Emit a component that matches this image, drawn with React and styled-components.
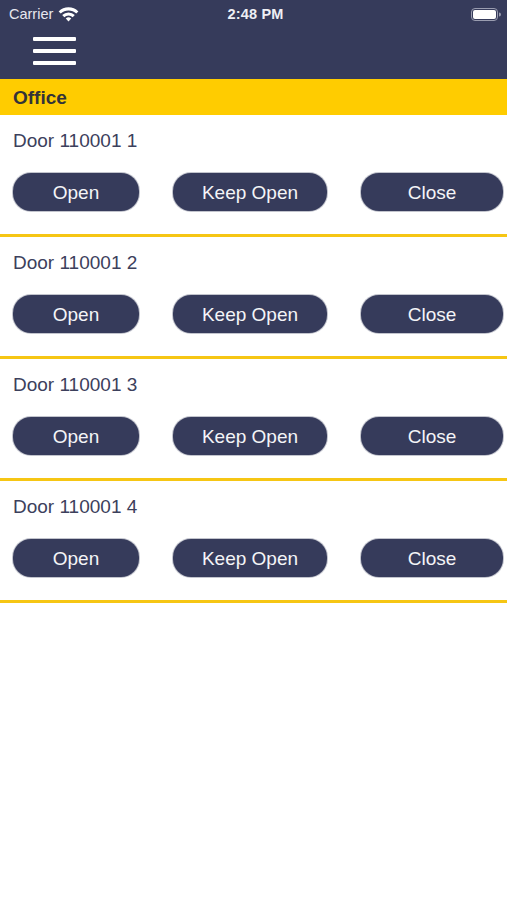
import styled, { createGlobalStyle } from "styled-components";

const Global = createGlobalStyle`
  html, body { margin: 0; padding: 0; background: #fff; }
  body { font-family: "Liberation Sans", Arial, sans-serif; }
`;

const Page = styled.div`
  width: 507px;
  min-height: 900px;
  background: #fff;
`;

const Header = styled.div`
  background-color: #363b5b;
  color: #fff;
`;

const StatusBar = styled.div`
  height: 28px;
  display: grid;
  grid-template-columns: 1fr auto 1fr;
  align-items: center;
  padding: 0 5px 0 9px;
  font-size: 14.5px;
`;

const Carrier = styled.div`
  display: flex;
  align-items: center;
  gap: 5px;
  color: #e6e7ee;
`;

const Time = styled.div`
  font-weight: bold;
  color: #eeeff4;
  letter-spacing: 0.2px;
`;

const Battery = styled.div`
  justify-self: end;
  display: flex;
  align-items: center;
`;

const Nav = styled.div`
  height: 51px;
  box-sizing: border-box;
  padding: 9px 0 0 33px;
`;

const Burger = styled.div`
  width: 43px;
  display: flex;
  flex-direction: column;
  gap: 8px;
  span {
    display: block;
    height: 4px;
    background: #fff;
    border-radius: 1px;
  }
`;

const Section = styled.div`
  height: 36px;
  box-sizing: border-box;
  padding: 1px 0 0 13px;
  line-height: 36px;
  background: #ffcc00;
  color: #333338;
  font-weight: bold;
  font-size: 19px;
`;

const Card = styled.div`
  padding: 14px 0 23px;
  border-bottom: 3px solid #f6c614;
`;

const DoorName = styled.div`
  font-size: 19px;
  line-height: 24px;
  color: #3c405c;
  padding-left: 13px;
`;

const Actions = styled.div`
  margin-top: 20px;
  display: flex;
  justify-content: space-between;
  padding: 0 4px 0 13px;
`;

const ActionButton = styled.button`
  width: ${(p) => p.$w}px;
  height: 38px;
  border: none;
  border-radius: 18px;
  background: #363b5b;
  box-shadow: 0 0 0 1px rgba(120, 124, 145, 0.45);
  color: #f4f4f7;
  font-family: "Liberation Sans", Arial, sans-serif;
  font-size: 19px;
  padding: 2px 0 0;
`;

const doors = ["Door 110001 1", "Door 110001 2", "Door 110001 3", "Door 110001 4"];

function Wifi() {
  return (
    <svg width="21" height="16" viewBox="0 0 20 15">
      <path d="M0.6 5 A13.5 13.5 0 0 1 19.4 5 L17.4 7.1 A10.6 10.6 0 0 0 2.6 7.1 Z" fill="#fff" />
      <path d="M4 8.5 A8.6 8.6 0 0 1 16 8.5 L14 10.6 A5.7 5.7 0 0 0 6 10.6 Z" fill="#fff" />
      <path d="M7.4 11.9 A3.8 3.8 0 0 1 12.6 11.9 L10 14.6 Z" fill="#fff" />
    </svg>
  );
}

function BatteryIcon() {
  return (
    <svg width="31" height="13" viewBox="0 0 31 13">
      <rect x="0.5" y="0.5" width="26" height="12" rx="3.5" fill="none" stroke="#9a9db0" />
      <rect x="2" y="2" width="23" height="9" rx="2" fill="#fff" />
      <path d="M28 4.5 a2 2 0 0 1 0 4 Z" fill="#9a9db0" />
    </svg>
  );
}

export default function App() {
  return (
    <Page>
      <Global />
      <Header>
        <StatusBar>
          <Carrier>
            Carrier <Wifi />
          </Carrier>
          <Time>2:48 PM</Time>
          <Battery>
            <BatteryIcon />
          </Battery>
        </StatusBar>
        <Nav>
          <Burger>
            <span />
            <span />
            <span />
          </Burger>
        </Nav>
      </Header>
      <Section>Office</Section>
      {doors.map((d) => (
        <Card key={d}>
          <DoorName>{d}</DoorName>
          <Actions>
            <ActionButton $w={126}>Open</ActionButton>
            <ActionButton $w={154}>Keep Open</ActionButton>
            <ActionButton $w={142}>Close</ActionButton>
          </Actions>
        </Card>
      ))}
    </Page>
  );
}
